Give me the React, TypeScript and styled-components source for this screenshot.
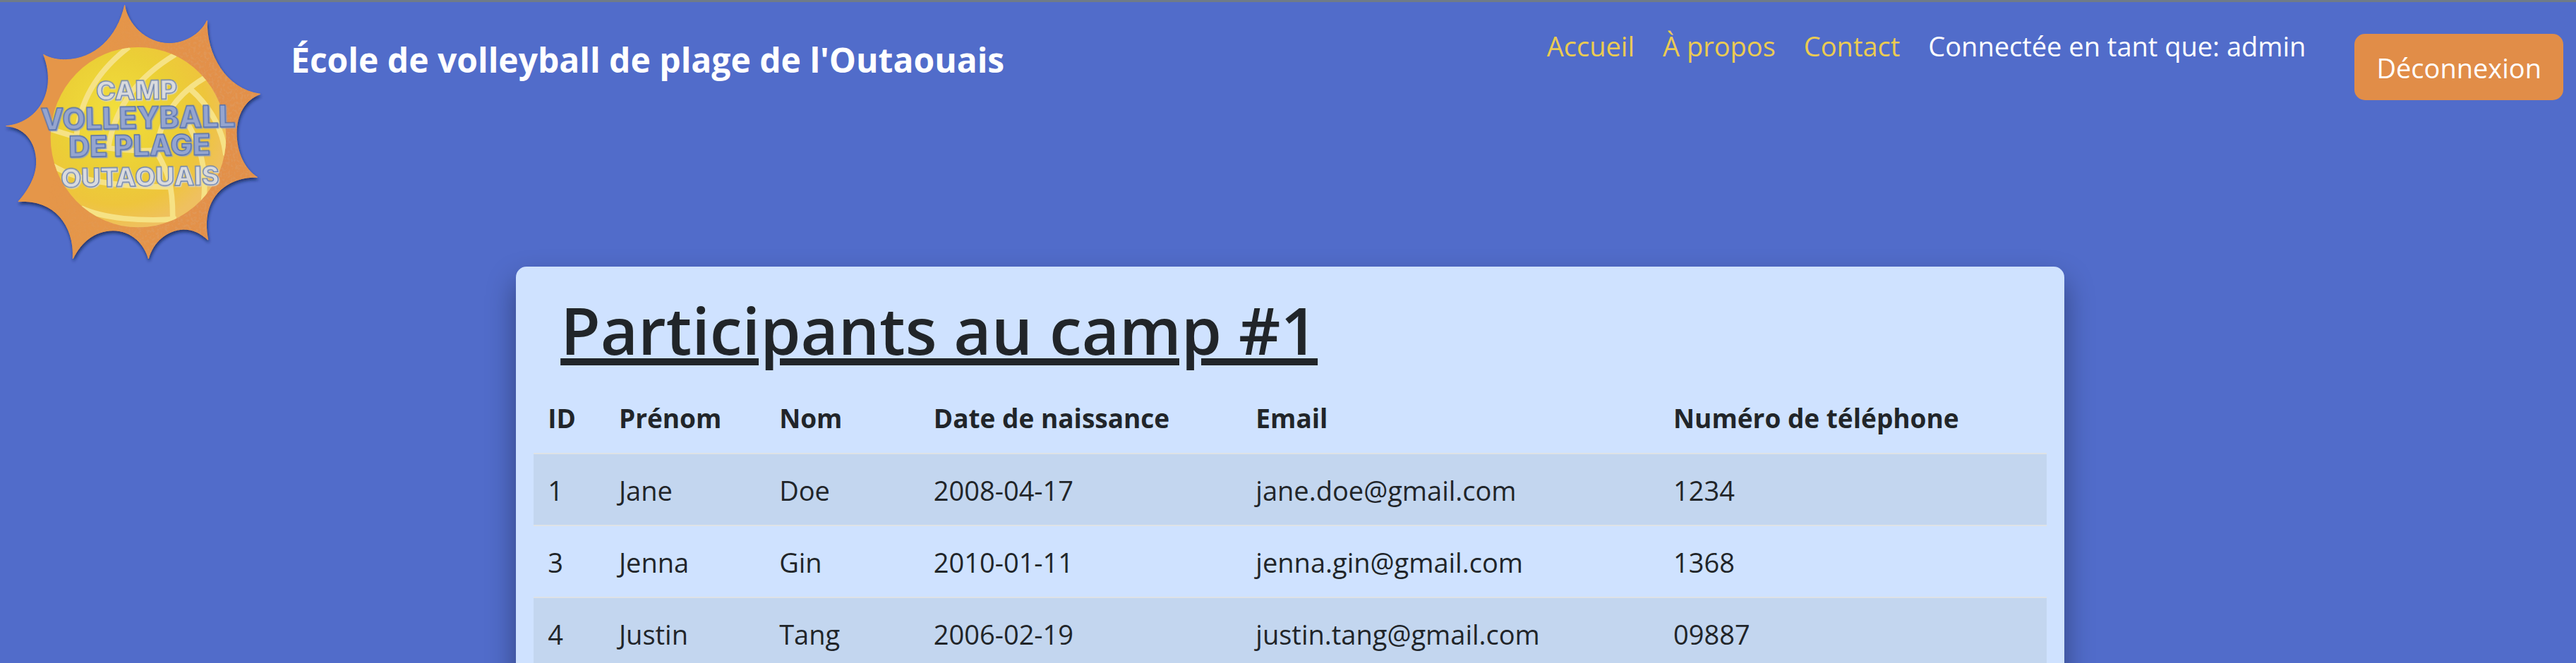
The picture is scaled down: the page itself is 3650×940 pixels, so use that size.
import React from "react";
import styled, { createGlobalStyle } from "styled-components";

const GlobalStyle = createGlobalStyle`
  *, *::before, *::after { box-sizing: border-box; }
  body {
    margin: 0;
    background: #516cca;
    color: #212529;
    font-family: "Open Sans", "Noto Sans", sans-serif;
    font-size: 38px;
    line-height: 60px;
  }
`;

const Page = styled.div`
  height: 100vh;
  overflow-x: hidden;
  overflow-y: auto;
  scrollbar-width: none;
  border-top: 3px solid #6f7b88;
`;

const Header = styled.header`
  display: flex;
  align-items: flex-start;
  padding-right: 18px;
`;

const LogoSvg = styled.svg`
  display: block;
  flex: none;
  width: 400px;
  height: 375px;
`;

const Brand = styled.a`
  margin: 44px auto 0 12px;
  color: #fff;
  font-size: 48px;
  font-weight: 700;
  line-height: 75px;
  text-decoration: none;
  white-space: nowrap;
`;

const Nav = styled.nav`
  display: flex;
  padding-top: 32px;
  margin-right: 49px;
  white-space: nowrap;
`;

const NavLink = styled.a`
  padding: 0 20px;
  color: #ebcb52;
  text-decoration: none;
`;

const UserStatus = styled.span`
  padding: 0 20px;
  color: #fff;
`;

const LogoutButton = styled.button`
  flex: none;
  margin-top: 45px;
  padding: 18px 31px 16px;
  border: 0;
  border-radius: 15px;
  background: #e18d48;
  color: #fff;
  font: inherit;
  cursor: pointer;
`;

const Main = styled.main`
  padding-left: 6px;
`;

const Card = styled.section`
  width: 60.2%;
  margin: 0 auto;
  padding: 30px 25px 40px;
  border-radius: 15px;
  background: #cfe2ff;
  box-shadow: 0 20px 40px rgba(0, 0, 0, 0.38);
`;

const Title = styled.h1`
  margin: 0 38px 14px;
  font-size: 92px;
  font-weight: 600;
  line-height: 120px;
  text-decoration: underline;
  text-decoration-thickness: 10px;
  text-underline-offset: 5px;
`;

const Table = styled.table`
  width: 100%;
  table-layout: fixed;
  border-collapse: separate;
  border-spacing: 0;
  text-align: left;

  th, td {
    padding: 21px 20px 19px;
    border-bottom: 2px solid #dee2e6;
    white-space: nowrap;
  }

  th {
    font-size: 37px;
  }

  tbody tr:nth-child(odd) {
    background: #c3d6ef;
  }
`;

const Col = styled.col<{ $share: number }>`
  width: ${(p) => p.$share}%;
`;

const columns = [
  { label: "ID", share: 4.7 },
  { label: "Prénom", share: 10.6 },
  { label: "Nom", share: 10.2 },
  { label: "Date de naissance", share: 21.3 },
  { label: "Email", share: 27.6 },
  { label: "Numéro de téléphone", share: 25.6 },
];

const participants = [
  ["1", "Jane", "Doe", "2008-04-17", "jane.doe@gmail.com", "1234"],
  ["3", "Jenna", "Gin", "2010-01-11", "jenna.gin@gmail.com", "1368"],
  ["4", "Justin", "Tang", "2006-02-19", "justin.tang@gmail.com", "09887"],
];

const LogoText = styled.text<{ $tone: "light" | "blue" }>`
  font-family: Inter, sans-serif;
  font-weight: 800;
  text-anchor: middle;
  fill: ${(p) => (p.$tone === "light" ? "#dadbdd" : "#95a5cf")};
  stroke: ${(p) => (p.$tone === "light" ? "#6d83ae" : "#536fab")};
  stroke-width: 4px;
  filter: drop-shadow(4px 4px 0 ${(p) => (p.$tone === "light" ? "#d3d4cf" : "#8c9dc6")});
`;

const SUN =
  "M530 22C540 100 620 185 720 185C780 185 850 150 880 88C875 230 960 380 1106 400C1040 425 1005 490 1005 565C1005 650 1040 720 1094 754C980 748 845 830 884 1020C850 990 820 975 780 975C710 978 650 1030 631 1100C615 1040 560 980 480 980C400 982 345 1030 310 1100C318 960 230 845 78 857C120 810 155 750 155 690C155 600 100 540 26 536C150 525 250 400 185 232C215 250 250 255 280 254C400 252 500 160 530 22Z";

function Logo() {
  return (
    <LogoSvg viewBox="0 9 1200 1125" role="img" aria-label="Camp volleyball de plage Outaouais">
      <defs>
        <linearGradient id="sun" x1="0" y1="0" x2="1" y2="0">
          <stop offset="0.4" stopColor="#e59648" />
          <stop offset="0.8" stopColor="#e39048" />
        </linearGradient>
        <radialGradient id="ball" gradientUnits="userSpaceOnUse" cx="490" cy="480" r="500">
          <stop offset="0" stopColor="#f2df3c" />
          <stop offset="0.5" stopColor="#ebcf36" />
          <stop offset="0.78" stopColor="#eec53c" />
          <stop offset="1" stopColor="#efc060" />
        </radialGradient>
        <linearGradient id="grainFade" x1="0" y1="0.2" x2="1" y2="0.5">
          <stop offset="0.3" stopColor="#000" />
          <stop offset="0.75" stopColor="#fff" />
        </linearGradient>
        <mask id="grainMask" maskUnits="userSpaceOnUse" x="0" y="0" width="1200" height="1140">
          <path d={SUN} fill="url(#grainFade)" />
        </mask>
        <filter id="grain" x="0" y="0" width="1" height="1">
          <feTurbulence type="fractalNoise" baseFrequency="0.09" numOctaves="2" seed="4" />
          <feColorMatrix values="0 0 0 0 0.72  0 0 0 0 0.38  0 0 0 0 0.17  5 0 0 0 -2.3" />
        </filter>
        <filter id="sunShadow" x="-10%" y="-10%" width="120%" height="120%">
          <feDropShadow dx="3" dy="10" stdDeviation="6" floodColor="#18224a" floodOpacity="0.75" />
        </filter>
        <clipPath id="ballClip">
          <ellipse cx="588" cy="584" rx="373" ry="383" />
        </clipPath>
      </defs>
      <path d={SUN} fill="url(#sun)" stroke="#e59648" strokeWidth="3" filter="url(#sunShadow)" />
      <g mask="url(#grainMask)">
        <rect width="1200" height="1140" filter="url(#grain)" opacity="0.3" />
      </g>
      <ellipse cx="588" cy="584" rx="373" ry="383" fill="url(#ball)" />
      <g clipPath="url(#ballClip)" fill="none" stroke="#f6e285" strokeWidth="23">
        <path d="M548 200C430 290 340 410 325 580" />
        <path d="M200 545L330 585" />
        <path d="M745 232C600 320 490 440 460 630" />
        <path d="M430 625C520 640 600 645 675 638" />
        <path d="M875 328C750 400 680 500 665 645C700 710 735 760 734 925" />
        <path d="M808 378C890 450 945 540 960 660" />
        <path d="M795 520C860 630 880 740 865 860" />
        <path d="M225 705C330 770 500 795 735 795" />
        <path d="M345 885C440 930 600 942 750 932" />
      </g>
      <g transform="rotate(-1 588 584)">
        <LogoText $tone="light" x="584" y="422" fontSize="112">CAMP</LogoText>
        <LogoText $tone="blue" x="588" y="546" fontSize="126">VOLLEYBALL</LogoText>
        <LogoText $tone="blue" x="592" y="664" fontSize="124">DE PLAGE</LogoText>
        <LogoText $tone="light" x="592" y="793" fontSize="112">OUTAOUAIS</LogoText>
      </g>
    </LogoSvg>
  );
}

export default function App() {
  return (
    <Page>
      <GlobalStyle />
      <Header>
        <Logo />
        <Brand href="#">École de volleyball de plage de l'Outaouais</Brand>
        <Nav>
          <NavLink href="#accueil">Accueil</NavLink>
          <NavLink href="#a-propos">À propos</NavLink>
          <NavLink href="#contact">Contact</NavLink>
          <UserStatus>Connectée en tant que: admin</UserStatus>
        </Nav>
        <LogoutButton type="button">Déconnexion</LogoutButton>
      </Header>
      <Main>
        <Card>
          <Title>Participants au camp #1</Title>
          <Table>
            <colgroup>
              {columns.map((c) => (
                <Col key={c.label} $share={c.share} />
              ))}
            </colgroup>
            <thead>
              <tr>
                {columns.map((c) => (
                  <th key={c.label} scope="col">{c.label}</th>
                ))}
              </tr>
            </thead>
            <tbody>
              {participants.map((row) => (
                <tr key={row[0]}>
                  {row.map((cell, i) => (
                    <td key={i}>{cell}</td>
                  ))}
                </tr>
              ))}
            </tbody>
          </Table>
        </Card>
      </Main>
    </Page>
  );
}
